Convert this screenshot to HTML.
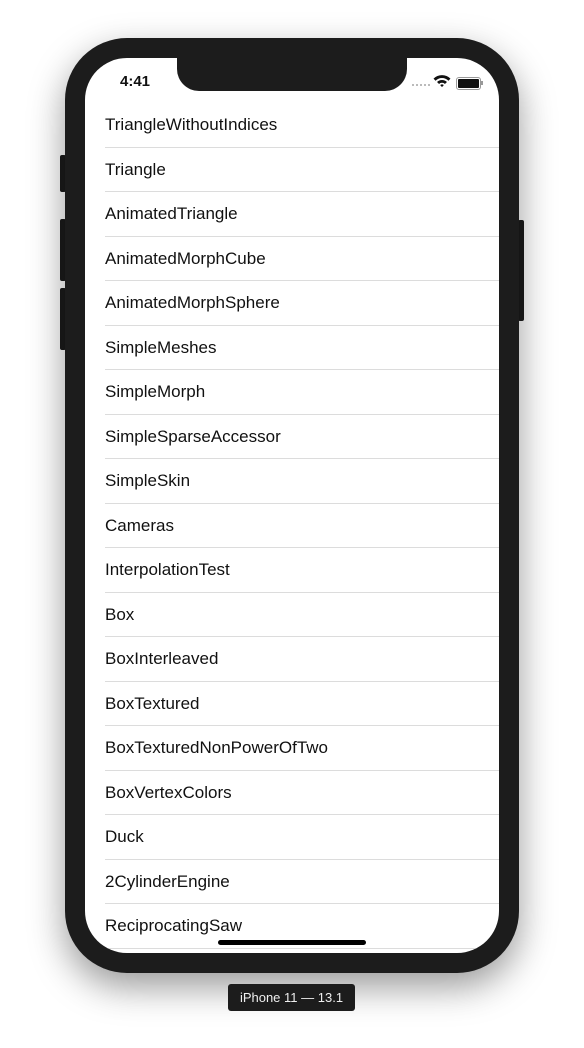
<!DOCTYPE html>
<html><head><style>
body{margin:0;width:584px;height:1048px;background:#fff;position:relative;overflow:hidden;font-family:"Liberation Sans",sans-serif}
.btn{position:absolute;background:#1b1b1b;border-radius:2px}
.phone{position:absolute;left:65px;top:38px;width:454px;height:935px;background:#1c1c1c;border-radius:62px;box-shadow:0 14px 36px rgba(0,0,0,.4)}
.screen{position:absolute;left:85px;top:58px;width:414px;height:895px;background:#fff;border-radius:42px;overflow:hidden}
.notch{position:absolute;left:92px;top:-2px;width:230px;height:35px;background:#1c1c1c;border-radius:0 0 22px 22px}
.row{position:absolute;left:20px;right:0;height:44.5px;font-size:17px;color:#111;line-height:44.5px}
.row:after{content:"";position:absolute;left:0;right:0;bottom:0;height:1px;background:#dcdcdc}
.label{position:absolute;left:228px;top:984px;width:127px;height:27px;background:#1c1c1c;border-radius:3px;color:#eee;font-size:13px;line-height:27px;text-align:center}
</style></head><body>
<div class="btn" style="left:60px;top:155px;width:6px;height:37px"></div>
<div class="btn" style="left:60px;top:219px;width:6px;height:62px"></div>
<div class="btn" style="left:60px;top:288px;width:6px;height:62px"></div>
<div class="btn" style="left:518px;top:220px;width:6px;height:101px"></div>
<div class="phone"></div>
<div class="screen">
<div class="notch"></div>
<div style="position:absolute;left:35px;top:15px;font-size:15px;font-weight:bold;color:#111">4:41</div>
<div style="position:absolute;left:327px;top:26px;width:18px;height:2px;border-top:2px dotted #bbb"></div>
<svg style="position:absolute;left:348px;top:16px" width="18" height="13" viewBox="0 0 17 12"><path d="M0.5 4.2A11.5 11.5 0 0 1 16.5 4.2L14.6 6.2A8.6 8.6 0 0 0 2.4 6.2Z M3.8 7.4A6.8 6.8 0 0 1 13.2 7.4L11.3 9.3A4 4 0 0 0 5.7 9.3Z M6.8 10.4A2.4 2.4 0 0 1 10.2 10.4L8.5 12.2Z" fill="#111"/></svg>
<div style="position:absolute;left:371px;top:19px;width:21px;height:9px;border:1px solid #999;border-radius:3px;padding:1px"><div style="width:100%;height:100%;background:#111;border-radius:1px"></div></div>
<div style="position:absolute;left:396px;top:23px;width:2px;height:4px;background:#999"></div>
<div class="row" style="top:45px">TriangleWithoutIndices</div>
<div class="row" style="top:89.5px">Triangle</div>
<div class="row" style="top:134px">AnimatedTriangle</div>
<div class="row" style="top:178.5px">AnimatedMorphCube</div>
<div class="row" style="top:223px">AnimatedMorphSphere</div>
<div class="row" style="top:267.5px">SimpleMeshes</div>
<div class="row" style="top:312px">SimpleMorph</div>
<div class="row" style="top:356.5px">SimpleSparseAccessor</div>
<div class="row" style="top:401px">SimpleSkin</div>
<div class="row" style="top:445.5px">Cameras</div>
<div class="row" style="top:490px">InterpolationTest</div>
<div class="row" style="top:534.5px">Box</div>
<div class="row" style="top:579px">BoxInterleaved</div>
<div class="row" style="top:623.5px">BoxTextured</div>
<div class="row" style="top:668px">BoxTexturedNonPowerOfTwo</div>
<div class="row" style="top:712.5px">BoxVertexColors</div>
<div class="row" style="top:757px">Duck</div>
<div class="row" style="top:801.5px">2CylinderEngine</div>
<div class="row" style="top:846px">ReciprocatingSaw</div>
<div style="position:absolute;left:133px;top:882px;width:148px;height:5px;background:#000;border-radius:3px"></div>
</div>
<div class="label">iPhone 11 — 13.1</div>
</body></html>
